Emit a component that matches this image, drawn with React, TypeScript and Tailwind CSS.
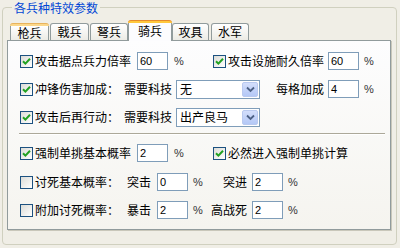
import React from 'react';

const cjk = "font-['Noto_Sans_CJK_SC','Noto_Sans',sans-serif]";
const num = "font-['Liberation_Sans',sans-serif]";

const tabs = [
  { label: '枪兵', w: 'w-[39px]', ml: 'ml-0', hot: true },
  { label: '戟兵', w: 'w-[39px]', ml: 'ml-[1px]' },
  { label: '弩兵', w: 'w-[38px]', ml: 'ml-[1px]' },
  { label: '骑兵', w: 'w-[44px]', ml: 'ml-0', active: true },
  { label: '攻具', w: 'w-[37px]', ml: 'ml-0' },
  { label: '水军', w: 'w-[38px]', ml: 'ml-[2px]' },
];

function Check({ checked }: { checked?: boolean }) {
  return (
    <span className="w-[13px] h-[13px] shrink-0 border border-[#1c5180] bg-linear-to-br from-[#dcdcd7] to-white flex items-center justify-center">
      {checked && (
        <svg width="9" height="9" viewBox="0 0 9 9">
          <path d="M1 4.2 L3.4 6.6 L8 1.8" stroke="#21a121" strokeWidth="2" fill="none" />
        </svg>
      )}
    </span>
  );
}

function Field({ value }: { value: string }) {
  return (
    <div className={`w-[31px] h-[18px] shrink-0 border border-[#7f9db9] bg-white text-[11px] text-black pl-[2px] flex items-center ${num}`}>
      {value}
    </div>
  );
}

function Pct({ ml = 'ml-[5px]' }: { ml?: string }) {
  return <span className={`${ml} text-[11px] text-[#333] ${num}`}>%</span>;
}

function Combo({ value }: { value: string }) {
  return (
    <div className="ml-[4px] w-[84px] h-[19px] shrink-0 border border-[#7f9db9] bg-white flex items-center p-px">
      <span className="flex-1 pl-[2px] text-[12px] leading-none">{value}</span>
      <span className="w-[16px] h-full rounded-[2px] border border-[#b9c9ef] bg-linear-to-b from-[#d3defb] to-[#b4c8f6] flex items-center justify-center">
        <svg width="9" height="7" viewBox="0 0 9 7">
          <path d="M1 1.5 L4.5 5 L8 1.5" stroke="#4d6185" strokeWidth="1.8" fill="none" />
        </svg>
      </span>
    </div>
  );
}

function Tab({ label, w, ml, active, hot }: { label: string; w: string; ml: string; active?: boolean; hot?: boolean }) {
  return (
    <div className={`${w} ${ml} shrink-0 flex flex-col ${active ? 'h-[21px] -mb-px relative z-10' : 'h-[17px]'}`}>
      {(active || hot) ? (
        <div className={`h-[3px] rounded-t-[3px] border-t ${active ? 'border-[#e68b2c] bg-[#ffc83c]' : 'border-[#e8b35c] bg-[#fbd78a]'}`} />
      ) : null}
      <div
        className={`flex-1 flex items-center justify-center text-[12px] leading-none border-x border-[#919b9c] ${
          active || hot ? '' : 'border-t rounded-t-[3px]'
        } ${active ? 'bg-[#fcfcfe] pb-[2px]' : 'bg-linear-to-b from-white to-[#ecebe5]'}`}
      >
        {label}
      </div>
    </div>
  );
}

export default function App() {
  return (
    <div className={`w-[400px] h-[248px] bg-[#f0eee6] px-[2px] overflow-hidden text-black ${cjk}`}>
      <fieldset className="w-[395px] h-[245px] border border-[#d0d0bf] rounded-[4px] px-[4px]">
        <legend className="ml-[5px] px-[2px] text-[12px] leading-[15px] text-[#0046d5]">各兵种特效参数</legend>

        <div className="mt-[5px] h-[20px] pl-[3px] flex items-end">
          {tabs.map((t) => (
            <Tab key={t.label} {...t} />
          ))}
        </div>

        <div className="w-[384px] h-[190px] border border-[#919b9c] bg-linear-to-b from-[#fdfdfe] to-[#f5f4ef] shadow-[1px_1px_0_#c9c7ba] pl-[12px] pt-[10px] text-[12px] leading-none">
          {/* row 1 */}
          <div className="h-[20px] flex items-center">
            <div className="w-[192px] flex items-center">
              <Check checked />
              <span className="ml-[2px] w-[96px]">攻击据点兵力倍率</span>
              <span className="ml-[6px]"><Field value="60" /></span>
              <Pct ml="ml-[6px]" />
            </div>
            <div className="ml-px flex items-center">
              <Check checked />
              <span className="ml-[2px] w-[96px]">攻击设施耐久倍率</span>
              <span className="ml-[4px]"><Field value="60" /></span>
              <Pct />
            </div>
          </div>

          {/* row 2 */}
          <div className="mt-[8px] h-[20px] flex items-center">
            <Check checked />
            <span className="ml-[2px] w-[84px]">冲锋伤害加成：</span>
            <span className="ml-[5px]">需要科技</span>
            <Combo value="无" />
            <span className="ml-[16px]">每格加成</span>
            <span className="ml-[4px]"><Field value="4" /></span>
            <Pct />
          </div>

          {/* row 3 */}
          <div className="mt-[8px] h-[20px] flex items-center">
            <Check checked />
            <span className="ml-[2px] w-[84px]">攻击后再行动：</span>
            <span className="ml-[5px]">需要科技</span>
            <Combo value="出产良马" />
          </div>

          <div className="mt-[6px] -ml-px mr-[5px] h-[2px] border-t border-[#aca899] border-b border-b-white" />

          {/* row 4 */}
          <div className="mt-[8px] h-[20px] flex items-center">
            <div className="w-[192px] flex items-center">
              <Check checked />
              <span className="ml-[2px] w-[96px]">强制单挑基本概率</span>
              <span className="ml-[6px]"><Field value="2" /></span>
              <Pct ml="ml-[6px]" />
            </div>
            <div className="ml-px flex items-center">
              <Check checked />
              <span className="ml-[2px]">必然进入强制单挑计算</span>
            </div>
          </div>

          {/* row 5 */}
          <div className="mt-[9px] h-[20px] flex items-center">
            <div className="w-[191px] flex items-center">
              <Check />
              <span className="ml-[2px] w-[84px]">讨死基本概率：</span>
              <span className="ml-[8px]">突击</span>
              <span className="ml-[6px]"><Field value="0" /></span>
              <Pct />
            </div>
            <span className="w-[36px] text-right">突进</span>
            <span className="ml-[5px]"><Field value="2" /></span>
            <Pct />
          </div>

          {/* row 6 */}
          <div className="mt-[8px] h-[20px] flex items-center">
            <div className="w-[191px] flex items-center">
              <Check />
              <span className="ml-[2px] w-[84px]">附加讨死概率：</span>
              <span className="ml-[8px]">暴击</span>
              <span className="ml-[6px]"><Field value="2" /></span>
              <Pct />
            </div>
            <span className="w-[36px] text-right">高战死</span>
            <span className="ml-[5px]"><Field value="2" /></span>
            <Pct />
          </div>
        </div>
      </fieldset>
    </div>
  );
}
